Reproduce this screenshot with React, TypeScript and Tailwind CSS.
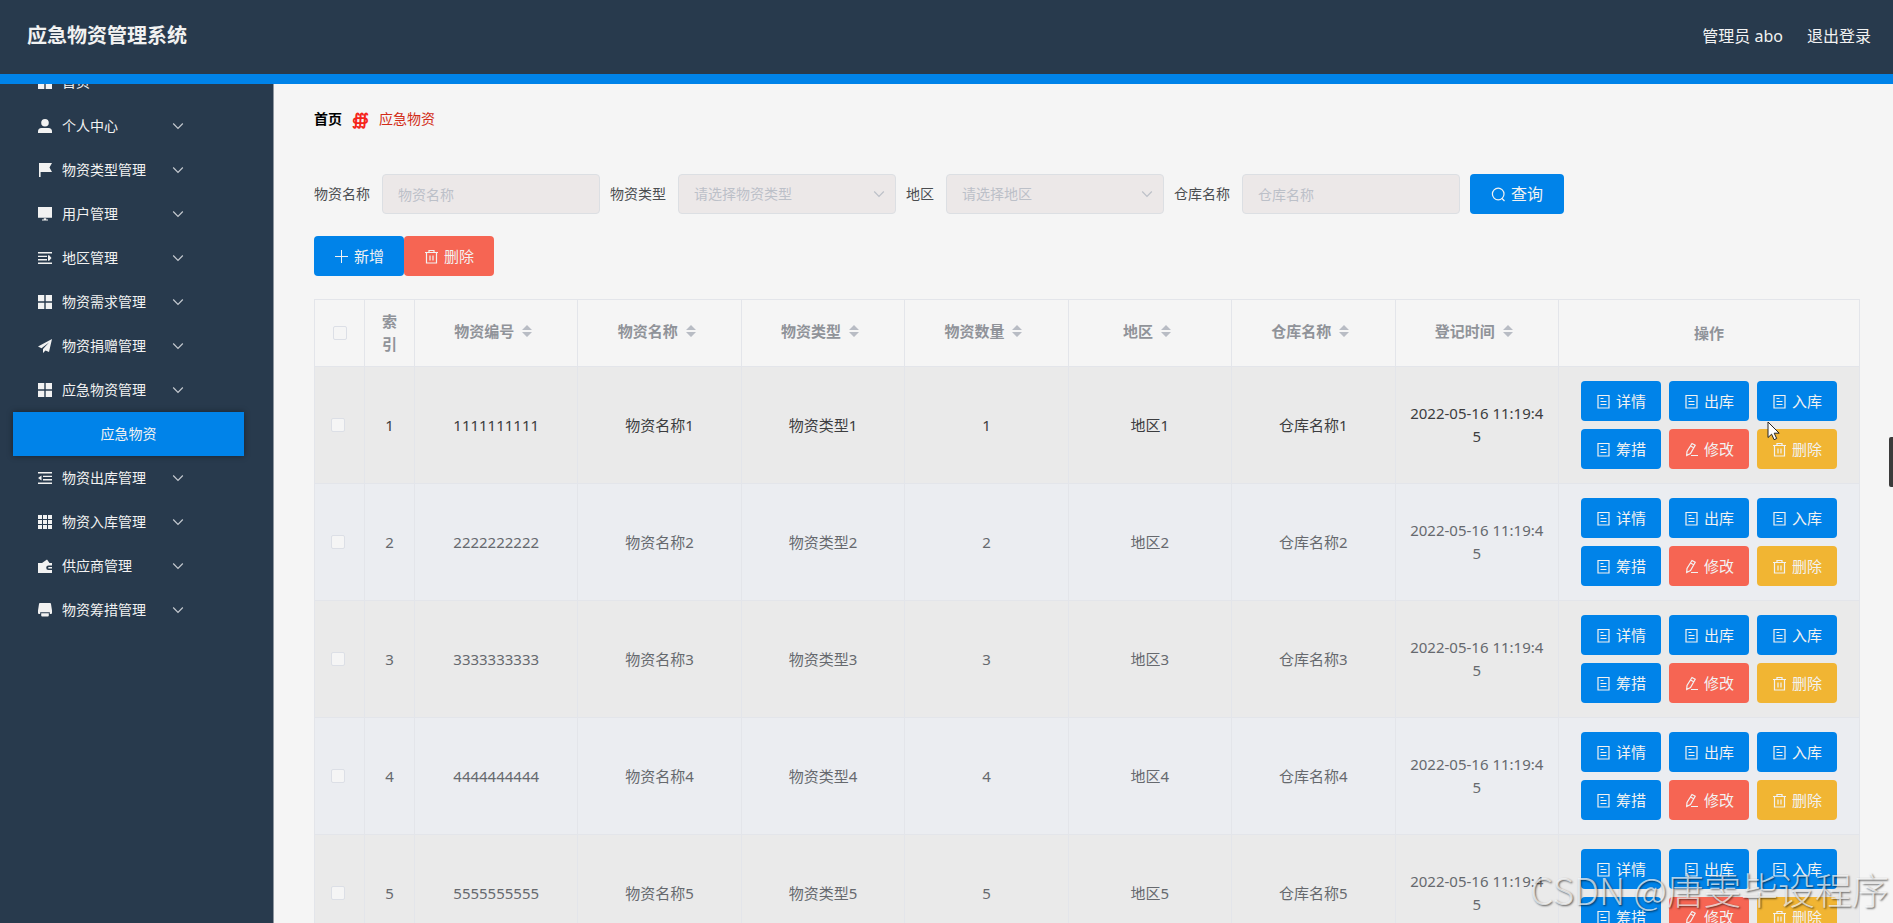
import { useState } from "react";

const Doc = () => (
  <svg className="h-[15px] w-[15px]" viewBox="0 0 15 15" fill="none" stroke="currentColor" strokeWidth="1.2">
    <path d="M2 1.500h11v12.500h-11zM4.500 4.500h3M4.500 7.500h6M4.500 10.500h6" />
  </svg>
);

const Trash = () => (
  <svg className="h-[15px] w-[15px]" viewBox="0 0 15 15" fill="none" stroke="currentColor" strokeWidth="1.2">
    <path d="M1 3.500h13M5 3.500v-2h5v2M2.500 3.500v10.500h10v-10.500M6 6.500v5M9 6.500v5" />
  </svg>
);

const Edit = () => (
  <svg className="h-[15px] w-[15px]" viewBox="0 0 15 15" fill="none" stroke="currentColor" strokeWidth="1.2">
    <path d="M8 1.500l3.200 1.700-4.700 8.300-3.800 2 .3-4zM6.500 4l3.200 1.800M7 13.500h7" />
  </svg>
);

const Plus = () => (
  <svg className="h-[15px] w-[15px]" viewBox="0 0 15 15" fill="none" stroke="currentColor">
    <path d="M7.500 1v13M1 7.500h13" />
  </svg>
);

const Search = () => (
  <svg className="h-[15px] w-[15px]" viewBox="0 0 15 15" fill="none" stroke="currentColor" strokeWidth="1.2">
    <circle cx="7.200" cy="7" r="5.800" />
    <path d="M11 11.500l2.500 2.500" />
  </svg>
);

const Chevron = ({ className }: { className: string }) => (
  <svg className={className} viewBox="0 0 12 12" fill="none" stroke="currentColor" strokeWidth="1.2">
    <path d="M1.200 3.500L6 8.300l4.800-4.800" />
  </svg>
);

const glyphs: Record<string, string> = {
  menu: "M0 0h6.300v6.300H0zM7.700 0H14v6.300H7.700zM0 7.700h6.300V14H0zM7.700 7.700H14V14H7.700z",
  user: "M7 0a3.800 3.800 0 1 1 0 7.600A3.800 3.800 0 0 1 7 0zM3.500 9h7A3.500 3.500 0 0 1 14 12.500V14H0v-1.500A3.500 3.500 0 0 1 3.500 9z",
  flag: "M1 0h13l-2.500 4.500L14 9H2.600v5H1z",
  monitor: "M0 0h14v10.800H0zM5.800 11.300h2.400v1.200h1.800v1H4v-1h1.800z",
  unfold: "M0 1h14v1.600H0zM0 4.700h9v1.400H0zM0 8h9v1.400H0zM0 11.500h14v1.600H0zM10 4.200h1.200l2.300 2.800-2.300 2.800H10z",
  plane: "M14 0L0 7.500l3.500 1.800L11 3.500 5 10v4l2.500-2.500L11 13z",
  fold: "M0 1h14v1.600H0zM5 4.700h9v1.400H5zM5 8h9v1.400H5zM0 11.500h14v1.600H0zM0 7l3.500-2.500v5z",
  grid: "M0 0h4v4H0zM5 0h4v4H5zM10 0h4v4h-4zM0 5h4v4H0zM5 5h4v4H5zM10 5h4v4h-4zM0 10h4v4H0zM5 10h4v4H5zM10 10h4v4h-4z",
  wallet: "M0 4h4l5-3.500L11.500 4H14v2.500h-3.500a2.300 2.300 0 0 0 0 4.600H14V14H0zM10.300 8H14v1.600h-3.700z",
  printer: "M2 0h10a1 1 0 0 1 1 1l1 6.500V10a1 1 0 0 1-1 1h-1.200V9.300H2.200V11H1a1 1 0 0 1-1-1V7.500L1 1a1 1 0 0 1 1-1zM3.200 10.300h7.600v2.200a1 1 0 0 1-1 1H4.200a1 1 0 0 1-1-1z",
};

const menus = [
  { name: "首页", icon: "menu" },
  { name: "个人中心", icon: "user" },
  { name: "物资类型管理", icon: "flag" },
  { name: "用户管理", icon: "monitor" },
  { name: "地区管理", icon: "unfold" },
  { name: "物资需求管理", icon: "menu" },
  { name: "物资捐赠管理", icon: "plane" },
  { name: "应急物资管理", icon: "menu", child: "应急物资" },
  { name: "物资出库管理", icon: "fold" },
  { name: "物资入库管理", icon: "grid" },
  { name: "供应商管理", icon: "wallet" },
  { name: "物资筹措管理", icon: "printer" },
];

const columns = ["物资编号", "物资名称", "物资类型", "物资数量", "地区", "仓库名称", "登记时间"];

const rows = [1, 2, 3, 4, 5].map((n) => ({
  id: n,
  cells: [String(n).repeat(10), `物资名称${n}`, `物资类型${n}`, String(n), `地区${n}`, `仓库名称${n}`, "2022-05-16 11:19:45"],
}));

const actions = [
  { label: "详情", icon: <Doc />, color: "bg-[#0083e9]" },
  { label: "出库", icon: <Doc />, color: "bg-[#0083e9]" },
  { label: "入库", icon: <Doc />, color: "bg-[#0083e9]" },
  { label: "筹措", icon: <Doc />, color: "bg-[#0083e9]" },
  { label: "修改", icon: <Edit />, color: "bg-[#f66553]" },
  { label: "删除", icon: <Trash />, color: "bg-[#f1b533]" },
];

const filters = [
  { id: "name", label: "物资名称", placeholder: "物资名称", select: false },
  { id: "type", label: "物资类型", placeholder: "请选择物资类型", select: true },
  { id: "area", label: "地区", placeholder: "请选择地区", select: true },
  { id: "store", label: "仓库名称", placeholder: "仓库名称", select: false },
];

const fieldClass =
  "h-10 w-[218px] appearance-none rounded border border-[#dcdfe3] bg-[#ece8e8] px-[15px] text-sm text-[#bcc0c8] outline-none placeholder:text-[#bcc0c8]";
const checkClass = "block h-[14px] w-[14px] appearance-none rounded-xs border border-[#dcdfe6] bg-[#f5f5f5] checked:bg-[#0083e9]";

const Sidebar = () => (
  <aside className="w-[274px] shrink-0 overflow-hidden border-r border-[#8e969f] bg-[#283a4d] text-sm text-[#f2f2f2]">
    <ul className="-mt-6">
      {menus.map((m) => (
        <li key={m.name}>
          <a href="#" className="flex h-11 items-center pl-[38px]">
            <svg className="mr-[10px] h-[14px] w-[14px]" viewBox="0 0 14 14" fill="currentColor" fillRule="evenodd">
              <path d={glyphs[m.icon]} />
            </svg>
            <span className="w-[110px]">{m.name}</span>
            {m.name !== "首页" && <Chevron className="h-3 w-3 text-[#c5cad0]" />}
          </a>
          {m.child && (
            <a href="#" className="mr-[29px] ml-[13px] flex h-11 items-center justify-center bg-[#0083e9] shadow-[0_0_6px_rgba(0,0,0,0.4)]">
              {m.child}
            </a>
          )}
        </li>
      ))}
    </ul>
  </aside>
);

const App = () => {
  const [selected, setSelected] = useState<number[]>([]);

  const toggle = (id: number) =>
    setSelected(selected.includes(id) ? selected.filter((s) => s !== id) : [...selected, id]);

  const toggleAll = () => setSelected(selected.length === rows.length ? [] : rows.map((r) => r.id));

  return (
    <div className="relative flex h-screen flex-col overflow-hidden bg-[#f5f5f5] font-['Noto_Sans','Noto_Sans_CJK_SC',sans-serif]">
      <header className="flex h-[84px] shrink-0 items-center justify-between border-b-[10px] border-[#0083e9] bg-[#283a4d] pr-[22px] pb-[3px] pl-[27px] text-[#f2f2f2]">
        <h1 className="text-xl font-bold">应急物资管理系统</h1>
        <div className="flex gap-6">
          <span>管理员 abo</span>
          <a href="#">退出登录</a>
        </div>
      </header>

      <div className="flex min-h-0 flex-1">
        <Sidebar />

        <main className="min-w-0 flex-1 overflow-hidden pt-[23px] pr-[33px] pl-10">
          <nav className="flex h-6 items-center gap-[10px] text-sm text-[#d22c17]">
            <a href="#" className="font-bold text-black">首页</a>
            <span className="text-base font-bold text-[#f5241a]">∰</span>
            <span>应急物资</span>
          </nav>

          <form className="mt-[43px] flex items-center gap-[10px] text-sm text-[#4b4d50]" onSubmit={(e) => e.preventDefault()}>
            {filters.map((f) => (
              <div key={f.id} className="flex items-center gap-3">
                <label htmlFor={f.id}>{f.label}</label>
                {f.select ? (
                  <div className="relative">
                    <select id={f.id} className={fieldClass}>
                      <option>{f.placeholder}</option>
                    </select>
                    <Chevron className="pointer-events-none absolute top-[14px] right-[11px] h-3 w-3 text-[#bcc0c8]" />
                  </div>
                ) : (
                  <input id={f.id} type="text" placeholder={f.placeholder} className={fieldClass} />
                )}
              </div>
            ))}
            <button type="submit" className="flex h-10 w-[94px] items-center justify-center gap-[5px] rounded bg-[#0083e9] text-base text-[#f2f2f2]">
              <Search />
              查询
            </button>
          </form>

          <div className="mt-[22px] flex text-[15px] text-[#f2f2f2]">
            <button className="flex h-10 w-[90px] items-center justify-center gap-[5px] rounded bg-[#0083e9]">
              <Plus />
              新增
            </button>
            <button className="flex h-10 w-[90px] items-center justify-center gap-[5px] rounded bg-[#f66553]">
              <Trash />
              删除
            </button>
          </div>

          <table className="mt-[23px] w-full table-fixed border-collapse text-center text-[15px] leading-[23px] [&_td]:border [&_td]:border-[#e3e5ea] [&_th]:border [&_th]:border-[#e3e5ea]">
            <colgroup>
              <col className="w-[50px]" />
              <col className="w-[50px]" />
              {columns.map((c) => (
                <col key={c} />
              ))}
              <col className="w-[301px]" />
            </colgroup>
            <thead>
              <tr className="h-[67px] text-[#909399]">
                <th>
                  <input type="checkbox" aria-label="全选" className={`${checkClass} mx-auto`} checked={selected.length === rows.length} onChange={toggleAll} />
                </th>
                <th className="px-[10px] font-bold">索引</th>
                {columns.map((c) => (
                  <th key={c} className="pb-1 font-bold">
                    <button className="inline-flex items-center gap-2 pr-[6px]">
                      {c}
                      <svg className="h-3 w-[10px]" viewBox="0 0 10 12" fill="#b8bcc4">
                        <path d="M0 5l5-5 5 5zM0 7h10l-5 5z" />
                      </svg>
                    </button>
                  </th>
                ))}
                <th className="font-bold">操作</th>
              </tr>
            </thead>
            <tbody>
              {rows.map((row) => (
                <tr key={row.id} className="h-[117px] text-[#66696e] odd:bg-[#eaeaea] even:bg-[#ebedf1] first:text-[#3c3d3f]">
                  <td>
                    <input type="checkbox" aria-label={`选择${row.id}`} className={`${checkClass} ml-4`} checked={selected.includes(row.id)} onChange={() => toggle(row.id)} />
                  </td>
                  <td>{row.id}</td>
                  {row.cells.map((cell, i) => (
                    <td key={i} className="px-3 break-all">{cell}</td>
                  ))}
                  <td>
                    <div className="flex flex-wrap justify-center gap-2 px-3">
                      {actions.map((a) => (
                        <button key={a.label} className={`${a.color} flex h-10 w-20 items-center justify-center gap-[5px] rounded text-[#f2f2f2]`}>
                          {a.icon}
                          {a.label}
                        </button>
                      ))}
                    </div>
                  </td>
                </tr>
              ))}
            </tbody>
          </table>
        </main>
      </div>

      <div className="absolute top-[437px] right-0 h-[50px] w-1 rounded-l-xs bg-[#3b3b3b]" />
      <svg className="pointer-events-none absolute top-[421px] left-[1767px] h-5 w-[14px]" viewBox="0 0 14 20" fill="#fff" stroke="#222">
        <path d="M1 1v15.500l3.600-3.300 2.500 5.500 2.600-1.200-2.500-5.300h5z" />
      </svg>
      <div className="pointer-events-none absolute right-1 bottom-3 font-['Noto_Sans_CJK_SC',sans-serif] text-[37px] leading-[44px] font-light whitespace-nowrap text-white/70 [text-shadow:1px_1px_2px_rgba(0,0,0,0.6)]">
        CSDN @唐雯毕设程序
      </div>
    </div>
  );
};

export default App;
